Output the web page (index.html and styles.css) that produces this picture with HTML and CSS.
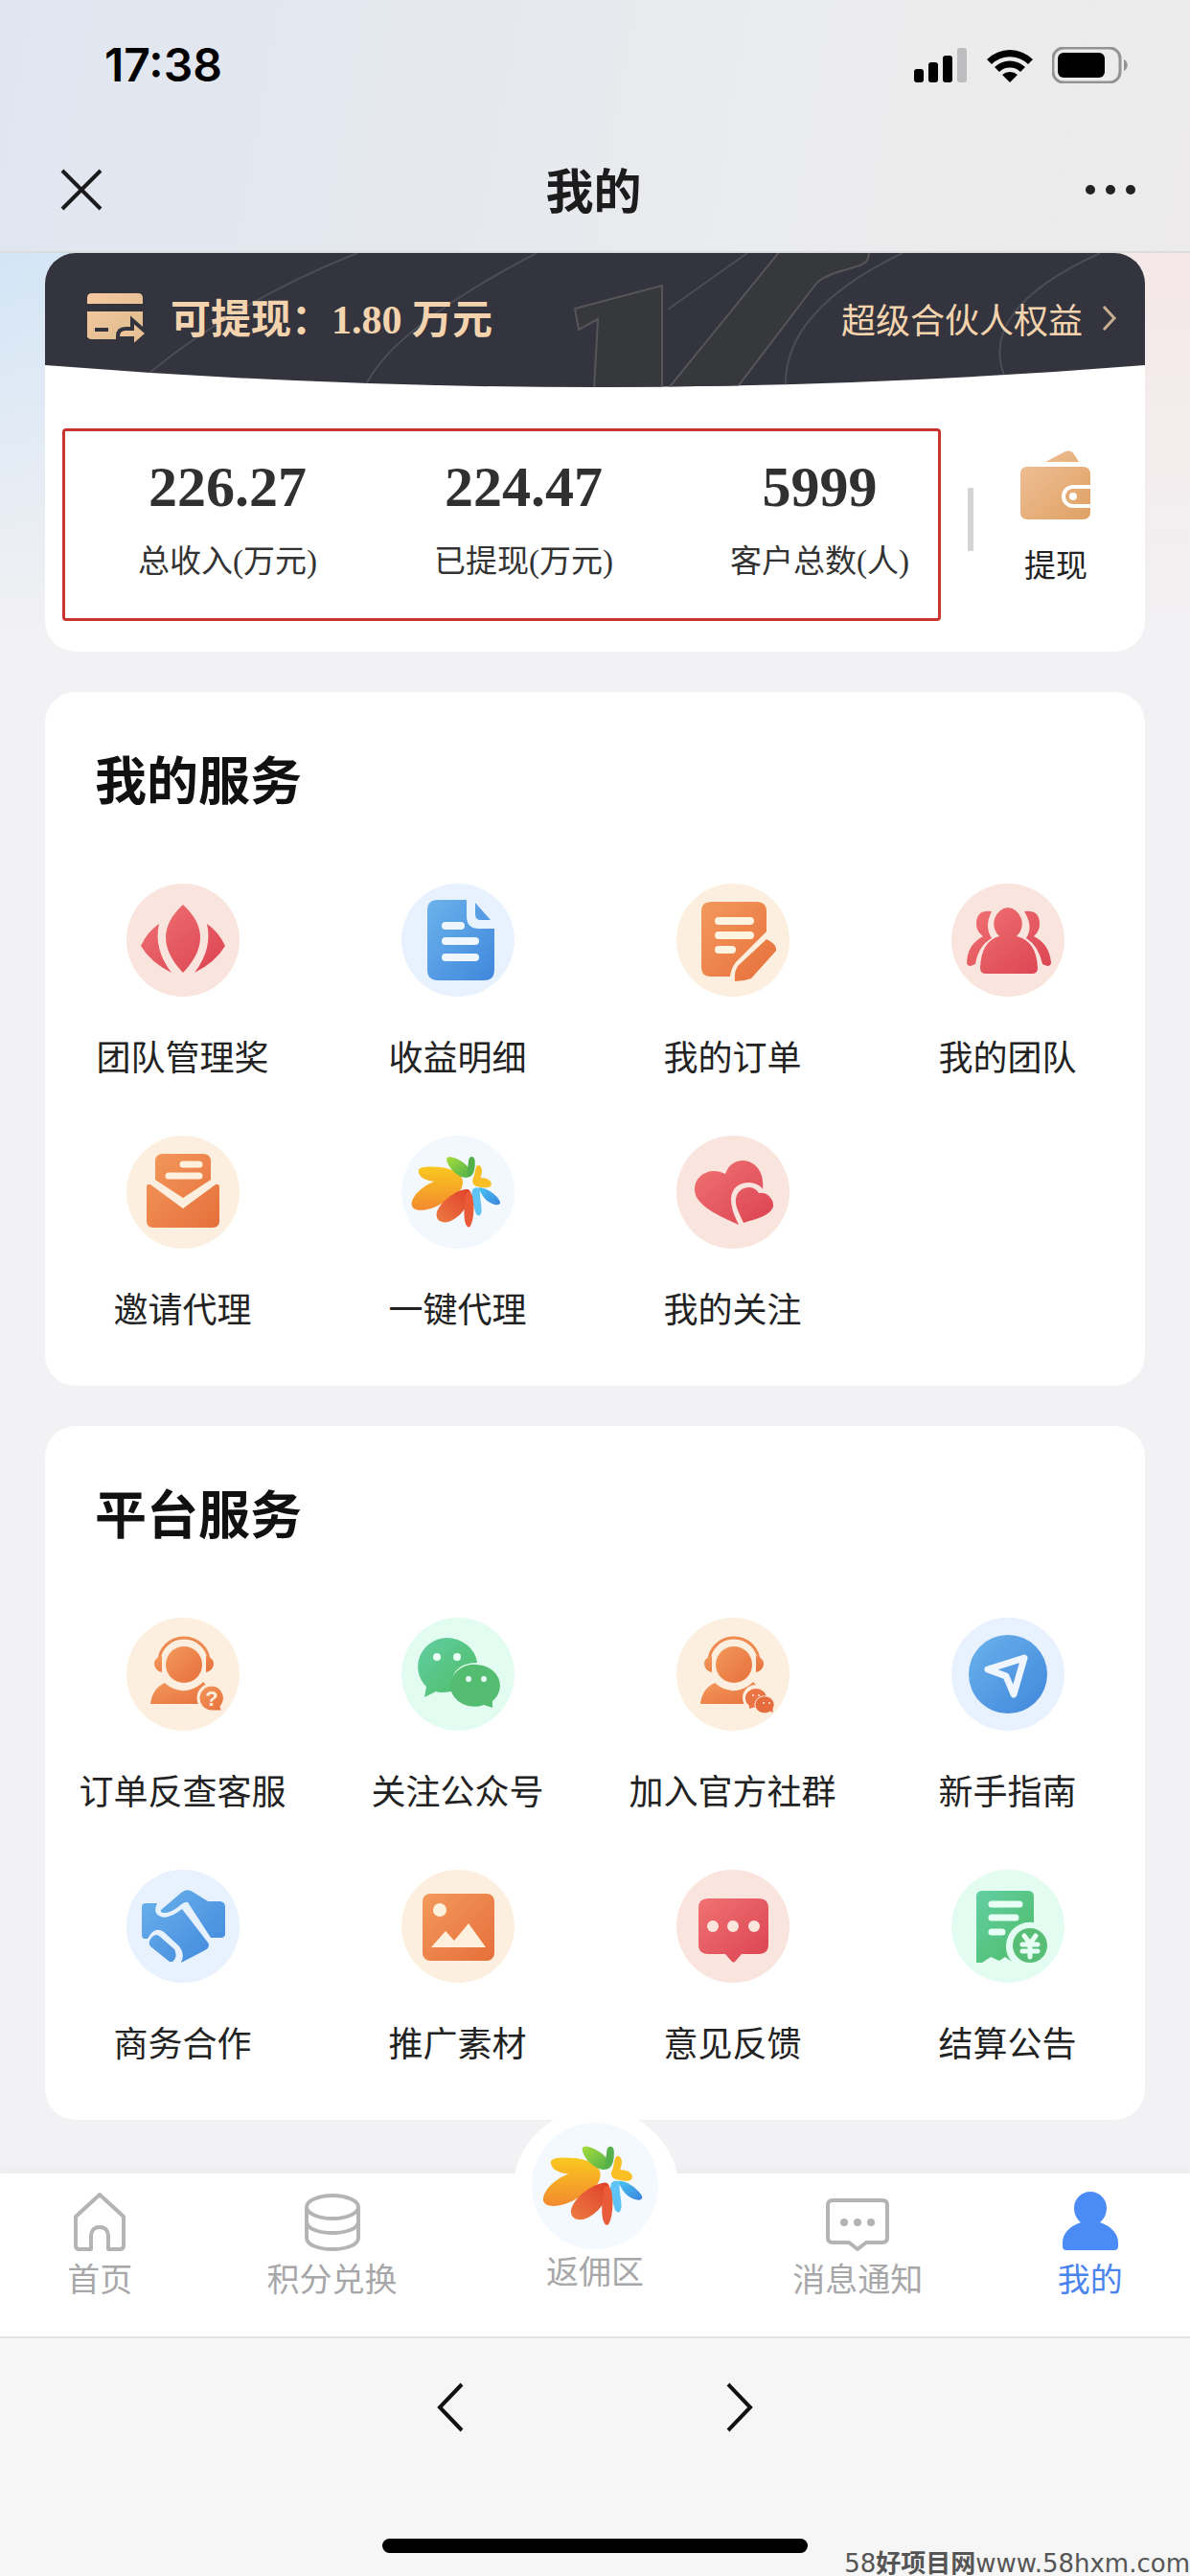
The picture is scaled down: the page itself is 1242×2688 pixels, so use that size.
FILE: index.html
```html
<!DOCTYPE html>
<html lang="zh-CN">
<head>
<meta charset="utf-8">
<meta name="viewport" content="width=device-width, initial-scale=1">
<title>我的</title>
<link rel="stylesheet" href="styles.css">
</head>
<body>
<svg class="defs" aria-hidden="true">
  <defs>
    <linearGradient id="red" x1="0" y1="0" x2="1" y2="1"><stop offset="0" stop-color="#f07272"/><stop offset="1" stop-color="#db4352"/></linearGradient>
    <linearGradient id="blue" x1="0" y1="0" x2="1" y2="1"><stop offset="0" stop-color="#6bb2ec"/><stop offset="1" stop-color="#4087dc"/></linearGradient>
    <linearGradient id="orange" x1="0" y1="0" x2="1" y2="1"><stop offset="0" stop-color="#f3995c"/><stop offset="1" stop-color="#e66f3a"/></linearGradient>
    <linearGradient id="green" x1="0" y1="0" x2="1" y2="1"><stop offset="0" stop-color="#62cfa3"/><stop offset="1" stop-color="#4ebb66"/></linearGradient>
    <linearGradient id="gold" x1="0" y1="0" x2="1" y2="1"><stop offset="0" stop-color="#f0c198"/><stop offset="1" stop-color="#dfa164"/></linearGradient>
    <linearGradient id="sand" x1="0" y1="0" x2="1" y2="1"><stop offset="0" stop-color="#f8c9a2"/><stop offset="1" stop-color="#dcbc8c"/></linearGradient>
    <linearGradient id="sun" x1="0" y1="0" x2="0" y2="1"><stop offset="0" stop-color="#f9c820"/><stop offset="1" stop-color="#f38a2e"/></linearGradient>
    <linearGradient id="ember" x1="1" y1="0" x2="0" y2="1"><stop offset="0" stop-color="#e03f2a"/><stop offset="1" stop-color="#ec7c42"/></linearGradient>
    <linearGradient id="leaf" x1="0" y1="0" x2="1" y2="1"><stop offset="0" stop-color="#a6dc3c"/><stop offset="1" stop-color="#4fb04a"/></linearGradient>
    <linearGradient id="sky" x1="0" y1="0" x2="1" y2="1"><stop offset="0" stop-color="#48c4f4"/><stop offset="1" stop-color="#3c84dc"/></linearGradient>
    <symbol id="flower" viewBox="75 52 396 396">
      <path fill="url(#sun)" d="M135 180C130 160 165 160 195 162C245 162 292 185 290 215C288 250 265 262 225 284C175 318 115 322 111 295C108 270 140 232 190 212C165 210 138 200 135 180Z"/>
      <path fill="url(#leaf)" d="M233 132C238 120 265 128 290 145C310 160 325 178 318 192C305 205 280 198 262 182C245 168 232 145 233 132Z"/>
      <path fill="#55b04c" d="M310 140C312 122 330 122 332 138C334 165 330 190 312 197C302 190 308 160 310 140Z"/>
      <path fill="#f9bf25" d="M338 160C345 150 358 160 357 178C355 190 352 198 352 200C370 198 390 208 390 222C388 238 360 236 340 230C325 226 320 215 327 200C332 190 332 170 338 160Z"/>
      <path fill="#5fc4f5" d="M325 240C335 230 350 232 350 245C348 270 358 300 355 320C352 338 338 335 334 320C328 295 315 260 325 240Z"/>
      <path fill="url(#sky)" d="M345 234C375 232 415 265 421 285C420 300 395 295 375 280C360 268 352 250 345 234Z"/>
      <path fill="url(#ember)" d="M300 240C315 238 320 250 318 265C310 300 275 345 235 355C210 358 195 345 198 325C205 290 260 245 300 240Z"/>
      <path fill="#e85a38" d="M300 258C310 240 325 250 326 280C332 310 325 365 312 373C295 370 294 335 295 310Z"/>
    </symbol>
    <symbol id="agent" viewBox="0 0 118 118">
      <circle cx="60" cy="49" r="19" fill="url(#orange)"/>
      <path fill="none" stroke="#ee8a50" stroke-width="3" d="M34 46A26 25 0 0 1 86 46"/>
      <path fill="url(#orange)" d="M37 40V57C32 56 29 52 29 48S32 41 37 40ZM83 40V57C88 56 91 52 91 48S88 41 83 40Z"/>
      <path fill="url(#orange)" d="M25 90C26 80 31 72 40 68C52 79 68 79 80 67L84 71L92 90Z"/>
    </symbol>
  </defs>
</svg>

<header class="topbar">
  <div class="status">
    <span class="time">17:38</span>
    <span class="signals">
      <svg width="56" height="36" viewBox="0 0 56 36" aria-hidden="true"><rect y="22" width="10" height="14" rx="3"/><rect x="15" y="15" width="10" height="21" rx="3"/><rect x="30" y="8" width="10" height="28" rx="3"/><rect x="45" width="10" height="36" rx="3" fill="#bdbdbf"/></svg>
      <svg width="48" height="36" viewBox="0 0 48 36" aria-hidden="true"><path d="M24 36L16 28A12 12 0 0 1 32 28ZM8 20A23 23 0 0 1 40 20L35 25A16 16 0 0 0 13 25ZM0 12A34 34 0 0 1 48 12L43 17A27 27 0 0 0 5 17Z"/></svg>
      <svg width="80" height="38" viewBox="0 0 80 38" aria-hidden="true"><rect x="1" y="1" width="70" height="36" rx="11" fill="none" stroke="#939395" stroke-width="3"/><rect x="6" y="6" width="49" height="26" rx="6"/><path d="M75 13C80 15 80 23 75 25Z" fill="#939395"/></svg>
    </span>
  </div>
  <div class="nav">
    <button class="plain" aria-label="关闭"><svg width="44" height="44" viewBox="0 0 44 44" aria-hidden="true"><path d="M2 2L42 42M42 2L2 42" stroke="#1b1b1d" stroke-width="4"/></svg></button>
    <h1 class="nav-title">我的</h1>
    <button class="plain" aria-label="更多"><svg width="54" height="44" viewBox="0 0 54 44" aria-hidden="true"><g fill="#222"><circle cx="6" cy="22" r="5"/><circle cx="27" cy="22" r="5"/><circle cx="48" cy="22" r="5"/></g></svg></button>
  </div>
</header>

<main class="content">
  <section class="card wallet">
    <div class="banner">
      <svg class="banner-art" viewBox="0 0 1148 140" preserveAspectRatio="none" aria-hidden="true">
        <defs><clipPath id="arc"><path d="M0 0H1148V117Q574 163 0 117Z"/></clipPath></defs>
        <g clip-path="url(#arc)">
          <path fill="#34343e" d="M0 0H1148V140H0Z"/>
          <g fill="none" stroke="#4c4c54" stroke-width="2">
            <path d="M326 0Q200 50 108 126M513 0Q360 80 334 140M733 0L650 59M895 0Q770 60 773 140M1101 0Q970 60 1003 132"/>
          </g>
          <path fill="#37383c" stroke="#56565a" stroke-width="2" d="M553 58L644 34V142H573L577 69L557 80ZM767 -2H860C860 14 852 12 824 21C812 26 808 28 804 33L721 142H650Z"/>
        </g>
      </svg>
      <svg class="banner-icon" width="64" height="56" viewBox="0 0 64 56" aria-hidden="true">
        <path fill="url(#sand)" d="M5 0H53Q58 0 58 5V11H0V5Q0 0 5 0ZM0 19H58V46H0ZM0 44H58Q58 48 53 48H5Q0 48 0 44Z"/>
        <path d="M8 38H22" stroke="#34343e" stroke-width="4"/>
        <path fill="url(#sand)" stroke="#34343e" stroke-width="4" d="M32 48V45Q32 37 40 37H47V28L63 42L47 56V47H36V50Z"/>
      </svg>
      <p class="balance">可提现：1.80 万元</p>
      <a class="rights" href="#rights">超级合伙人权益<svg width="16" height="28" viewBox="0 0 16 28" aria-hidden="true"><path d="M2 2L13 14L2 26" fill="none" stroke="#c6b08e" stroke-width="3"/></svg></a>
    </div>
    <div class="summary">
      <dl class="stats">
        <div class="stat"><dt>总收入(万元)</dt><dd>226.27</dd></div>
        <div class="stat"><dt>已提现(万元)</dt><dd>224.47</dd></div>
        <div class="stat"><dt>客户总数(人)</dt><dd>5999</dd></div>
      </dl>
      <a class="withdraw" href="#withdraw">
        <svg width="76" height="74" viewBox="0 0 76 74" aria-hidden="true">
          <path fill="url(#gold)" d="M27 12L48 1Q54 -1 57 4L62 12ZM8 17H66Q74 17 74 25V36H56A12 12 0 0 0 56 60H74V64Q74 72 66 72H8Q1 72 1 64V25Q1 17 8 17ZM74 40V56H56A8 8 0 0 1 56 40Z"/>
          <circle cx="56" cy="48" r="4" fill="#fff"/>
        </svg>
        提现
      </a>
    </div>
  </section>

  <section class="card">
    <h2 class="card-title">我的服务</h2>
    <ul class="grid">
      <li><a class="item" href="#award"><svg class="icon rose" viewBox="0 0 118 118" aria-hidden="true"><path fill="url(#red)" d="M59 22Q95 55 59 93Q23 55 59 22ZM34 42Q28 68 47 93Q25 82 15 65Q22 50 34 42ZM84 42Q90 68 71 93Q93 82 103 65Q96 50 84 42Z"/></svg>团队管理奖</a></li>
      <li><a class="item" href="#income"><svg class="icon azure" viewBox="0 0 118 118" aria-hidden="true"><path fill="url(#blue)" d="M38 17H68V34Q68 47 81 47H97V90Q97 101 86 101H38Q27 101 27 90V28Q27 17 38 17ZM77 20L93 38H83Q77 38 77 32Z"/><path stroke="#eef6ff" stroke-width="8" stroke-linecap="round" d="M46 44H62M46 60H77M46 77H77"/></svg>收益明细</a></li>
      <li><a class="item" href="#orders"><svg class="icon cream" viewBox="0 0 118 118" aria-hidden="true"><path fill="url(#orange)" d="M36 19H84Q94 19 94 29V50L62 82Q57 88 56 97H36Q26 97 26 87V29Q26 19 36 19ZM94 58Q105 63 104 70L78 99Q70 102 61 102Q60 92 64 86Z"/><path stroke="#fff3e2" stroke-width="8" stroke-linecap="round" d="M44 39H77M44 54H77M44 69H58"/></svg>我的订单</a></li>
      <li><a class="item" href="#team"><svg class="icon rose" viewBox="0 0 118 118" aria-hidden="true"><path fill="url(#red)" d="M59 25A16 17 0 0 1 68 55Q89 60 90 88Q90 94 84 94H36Q30 94 30 88Q31 60 50 55A16 17 0 0 1 59 25ZM42 29Q26 27 26 42Q26 50 33 55Q17 63 16 82Q16 86 20 86L25 84Q28 65 42 57Q34 45 42 29ZM76 29Q92 27 92 42Q92 50 86 55Q102 63 104 82Q104 86 100 86L95 84Q91 65 78 57Q86 45 76 29Z"/></svg>我的团队</a></li>
      <li><a class="item" href="#invite"><svg class="icon cream" viewBox="0 0 118 118" aria-hidden="true"><path fill="url(#orange)" d="M38 19H80Q88 19 88 27V46L59 65L30 46V27Q30 19 38 19ZM21 54Q21 50 25 51L59 76L93 51Q97 50 97 54V89Q97 96 90 96H28Q21 96 21 89Z"/><path stroke="#fff0dd" stroke-width="7" stroke-linecap="round" d="M59 30H76M44 42H76"/></svg>邀请代理</a></li>
      <li><a class="item" href="#agency"><svg class="icon mist" aria-hidden="true"><use href="#flower"/></svg>一键代理</a></li>
      <li><a class="item" href="#follow"><svg class="icon rose" viewBox="0 0 118 118" aria-hidden="true"><path fill="url(#red)" d="M65 93C45 84 19 73 19 56C19 41 36 32 51 40C55 28 64 26 70 26C84 27 92 40 90 56C84 46 58 45 57 66C57 76 61 85 65 93ZM70 91C65 80 61 73 62 66C64 53 80 50 86 60C94 58 102 66 101 74C98 84 82 87 70 91Z"/></svg>我的关注</a></li>
    </ul>
  </section>

  <section class="card">
    <h2 class="card-title">平台服务</h2>
    <ul class="grid">
      <li><a class="item" href="#support"><svg class="icon cream" viewBox="0 0 118 118" aria-hidden="true"><use href="#agent"/><path fill="url(#orange)" stroke="#fdeedd" stroke-width="3" d="M89 70A14 14 0 1 0 89 98H101L99 93A14 14 0 0 0 89 70Z"/><text class="badge-text" x="89" y="92" text-anchor="middle">?</text></svg>订单反查客服</a></li>
      <li><a class="item" href="#wechat"><svg class="icon mint" viewBox="0 0 118 118" aria-hidden="true"><path fill="url(#green)" d="M47 21A32 29 0 0 1 79 47Q50 47 52 77Q40 79 36 77L24 83L26 72A31 30 0 0 1 47 21Z"/><path fill="#54bd72" d="M79 49A25 22 0 0 1 95 87V94L86 91A25 22 0 1 1 79 49Z"/><g fill="#eafff5"><circle cx="37" cy="41" r="4"/><circle cx="58" cy="41" r="4"/><circle cx="70" cy="64" r="3"/><circle cx="86" cy="64" r="3"/></g></svg>关注公众号</a></li>
      <li><a class="item" href="#group"><svg class="icon cream" viewBox="0 0 118 118" aria-hidden="true"><use href="#agent"/><circle cx="83" cy="84" r="14" fill="#fdeedd"/><path fill="#ea7443" d="M83 74A11 10 0 1 0 83 94A11 10 0 1 0 83 74ZM76 90V95L82 93Z"/><path fill="#e66c3e" stroke="#fdeedd" d="M94 82A10 9 0 1 0 98 98L101 100L101 95A10 9 0 0 0 94 82Z"/><g fill="#fdeedd"><circle cx="80" cy="81" r="1"/><circle cx="86" cy="81" r="1"/><circle cx="91" cy="89" r="1"/><circle cx="97" cy="89" r="1"/></g></svg>加入官方社群</a></li>
      <li><a class="item" href="#guide"><svg class="icon azure" viewBox="0 0 118 118" aria-hidden="true"><circle cx="59" cy="59" r="41" fill="url(#blue)"/><path fill="none" stroke="#eff6ff" stroke-width="7" stroke-linejoin="round" d="M76 42L38 54L57 61L65 80Z"/></svg>新手指南</a></li>
      <li><a class="item" href="#business"><svg class="icon azure" viewBox="0 0 118 118" aria-hidden="true"><path fill="url(#blue)" d="M20 35H32Q27 46 36 49Q44 52 58 41L85 76Q88 81 82 84L57 97Q62 86 53 78L39 65Q32 60 26 66L22 72H19Q16 72 16 68V39Q16 35 20 35ZM36 42L57 24Q63 19 69 23L85 33H98Q103 34 103 39V67Q103 71 98 71H88L64 34Q61 33 55 38Q45 46 38 45Q35 44 36 42ZM34 69L50 83Q54 91 48 96H45L25 80Q22 76 26 71Q30 66 34 69Z"/></svg>商务合作</a></li>
      <li><a class="item" href="#media"><svg class="icon cream" viewBox="0 0 118 118" aria-hidden="true"><rect x="22" y="25" width="75" height="70" rx="8" fill="url(#orange)"/><g fill="#fef0dd"><circle cx="40" cy="42" r="7"/><path d="M31 81L46 64L55 74L70 56L88 81Z"/></g></svg>推广素材</a></li>
      <li><a class="item" href="#feedback"><svg class="icon rose" viewBox="0 0 118 118" aria-hidden="true"><path fill="url(#red)" d="M33 30H86Q96 30 96 40V78Q96 88 86 88H68L61 96Q60 97 58 96L51 88H33Q23 88 23 78V40Q23 30 33 30Z"/><g fill="#fde6dd"><circle cx="38" cy="59" r="6"/><circle cx="59" cy="59" r="6"/><circle cx="81" cy="59" r="6"/></g></svg>意见反馈</a></li>
      <li><a class="item" href="#settlement"><svg class="icon mint" viewBox="0 0 118 118" aria-hidden="true"><path fill="url(#green)" d="M32 22H80Q86 22 86 28V55A25 25 0 0 0 63 96L56 91L50 95L41 91L32 97H26V28Q26 22 32 22Z"/><path stroke="#e8fff5" stroke-width="7" stroke-linecap="round" d="M42 36H71M42 50H67M42 65H53"/><circle cx="82" cy="79" r="18" fill="#58bd75"/><path stroke="#e8fff5" stroke-width="5" stroke-linecap="round" fill="none" d="M76 69L82 77L88 69M82 77V91M74 78H90M74 85H90"/></svg>结算公告</a></li>
    </ul>
  </section>
</main>

<nav class="tabs">
  <a class="tab" href="#home"><svg width="56" height="62" viewBox="0 0 56 62" aria-hidden="true"><path fill="none" stroke="#b4b4b6" stroke-width="4" stroke-linejoin="round" d="M28 3L53 26V56Q53 60 49 60H37V45Q36 37 28 37T19 45V60H7Q3 60 3 56V26Z"/></svg>首页</a>
  <a class="tab" href="#points"><svg width="60" height="62" viewBox="0 0 60 62" aria-hidden="true"><g fill="none" stroke="#b4b4b6" stroke-width="4"><ellipse cx="30" cy="16" rx="27" ry="12"/><path d="M3 16V48C3 64 57 64 57 48V16M3 31C3 47 57 47 57 31"/></g></svg>积分兑换</a>
  <a class="tab tab-main" href="#rebate"><svg class="tab-flower" aria-hidden="true"><use href="#flower"/></svg>返佣区</a>
  <a class="tab" href="#messages"><svg width="66" height="62" viewBox="0 0 66 62" aria-hidden="true"><path fill="none" stroke="#b4b4b6" stroke-width="4" stroke-linejoin="round" d="M7 9H59Q64 9 64 14V48Q64 53 59 53H42L33 60L24 53H7Q2 53 2 48V14Q2 9 7 9Z"/><g fill="#b4b4b6"><circle cx="19" cy="32" r="4"/><circle cx="33" cy="32" r="4"/><circle cx="47" cy="32" r="4"/></g></svg>消息通知</a>
  <a class="tab tab-active" href="#me" aria-current="page"><svg width="58" height="62" viewBox="0 0 58 62" aria-hidden="true"><path fill="#4a8bf5" d="M29 0C39 0 46 8 46 17C46 23 43 29 39 32C51 36 58 44 58 53V57Q58 61 54 61H4Q0 61 0 57V53C0 44 7 36 19 32C15 29 12 23 12 17C12 8 19 0 29 0Z"/></svg>我的</a>
</nav>

<footer class="browser">
  <div class="history">
    <button class="plain" aria-label="后退"><svg width="30" height="52" viewBox="0 0 30 52" aria-hidden="true"><path d="M27 2L4 26L27 50" fill="none" stroke="#111" stroke-width="4"/></svg></button>
    <button class="plain" aria-label="前进"><svg width="30" height="52" viewBox="0 0 30 52" aria-hidden="true"><path d="M3 2L26 26L3 50" fill="none" stroke="#111" stroke-width="4"/></svg></button>
  </div>
  <div class="home-bar"></div>
  <p class="site-mark">58<b>好项目网</b>www.58hxm.com</p>
</footer>
</body>
</html>
```
FILE: styles.css
```css
* { box-sizing: border-box; margin: 0; padding: 0; }

body {
  min-height: 100vh;
  display: flex;
  flex-direction: column;
  background: #f2f1f3;
  color: #222;
  font-family: "Noto Sans CJK SC", sans-serif;
}

a { color: inherit; text-decoration: none; }
ul { list-style: none; }
svg { display: block; flex: none; }
.defs { position: absolute; width: 0; height: 0; }
.plain { display: block; border: 0; background: none; }

/* Status bar and title */
.topbar {
  height: 264px;
  border-bottom: 2px solid #dcdde0;
  background: linear-gradient(100deg, #e0e6f0 0%, #e5e8ee 40%, #ebecee 65%, #edebeb 100%);
}
.status {
  height: 136px;
  padding: 0 64px 0 109px;
  display: flex;
  align-items: center;
  justify-content: space-between;
}
.time { font: 600 48px/56px Inter, sans-serif; color: #000; }
.signals { display: flex; align-items: center; gap: 20px; }
.nav {
  height: 124px;
  padding: 0 56px 0 63px;
  display: grid;
  grid-template-columns: 44px 1fr 54px;
  align-items: center;
}
.nav-title { padding-bottom: 4px; font-size: 50px; line-height: 72px; font-weight: 700; text-align: center; color: #1c1c1c; }

/* Cards */
.content {
  flex: 1;
  padding: 0 47px 56px;
  display: flex;
  flex-direction: column;
  gap: 42px;
  background:
    linear-gradient(180deg, rgba(242, 241, 243, 0) 0, #f2f1f3 400px),
    linear-gradient(90deg, #d3e5f6 0%, #e8ecf4 40%, #f5e8e8 96%);
}
.card { background: #fff; border-radius: 32px; padding-bottom: 57px; }
.card-title { padding: 55px 52px 75px; font-size: 54px; line-height: 70px; font-weight: 700; color: #111; }

.wallet { overflow: hidden; padding-bottom: 68px; }
.banner {
  position: relative;
  height: 140px;
  padding: 0 29px 0 44px;
  display: flex;
  align-items: center;
  color: #f4d4ae;
}
.banner-art { position: absolute; inset: 0; width: 100%; height: 100%; }
.banner-icon, .balance, .rights { position: relative; }
.balance {
  margin-left: 23px;
  font-family: "Liberation Serif", "Noto Sans CJK SC", serif;
  font-size: 42px;
  line-height: 60px;
  font-weight: 600;
}
.rights { margin-left: auto; padding-bottom: 4px; display: flex; align-items: center; gap: 20px; font-size: 36px; line-height: 50px; }

.summary { display: flex; align-items: flex-start; padding: 60px 33px 0 36px; }
.stats {
  position: relative;
  flex: 1;
  display: grid;
  grid-template-columns: repeat(3, 1fr);
  font-family: "Liberation Serif", "Noto Sans CJK SC", serif;
}
.stats::before {
  content: "";
  position: absolute;
  inset: -17px 28px -38px -18px;
  border: 3px solid #c8352d;
  border-radius: 4px;
}
.stat { display: flex; flex-direction: column-reverse; justify-content: flex-end; gap: 10px; text-align: center; }
.stat dt { font-size: 33px; line-height: 48px; color: #333; }
.stat dd { font-size: 60px; line-height: 88px; font-weight: 700; color: #303030; }
.withdraw {
  position: relative;
  width: 152px;
  padding: 6px 0 0 32px;
  display: flex;
  flex-direction: column;
  align-items: center;
  gap: 20px;
  font-size: 33px;
  line-height: 48px;
}
.withdraw::before { content: ""; position: absolute; left: 0; top: 45px; width: 6px; height: 66px; background: #d4d4d6; }

.grid { display: grid; grid-template-columns: repeat(4, 1fr); row-gap: 59px; }
.item { display: flex; flex-direction: column; align-items: center; gap: 36px; font-size: 36px; line-height: 50px; }
.icon { width: 118px; height: 118px; border-radius: 50%; }
.rose { background: #fae4de; }
.azure { background: #e8f1fe; }
.cream { background: #fdefdf; }
.mint { background: #e3fcf2; }
.mist { background: #f3f8ff; }
.badge-text { font: 700 22px "Liberation Sans", sans-serif; fill: #fdeedd; }

/* Tab bar */
.tabs {
  position: relative;
  height: 170px;
  padding-top: 19px;
  display: flex;
  align-items: flex-start;
  justify-content: space-around;
  background: #fff;
  box-shadow: 0 -2px 10px rgba(0, 0, 0, 0.04);
  font-size: 34px;
  line-height: 48px;
  color: #a7a7aa;
}
.tab { position: relative; display: flex; flex-direction: column; align-items: center; gap: 4px; }
.tab-active { color: #4a84ee; }
.tab-main { z-index: 1; width: 132px; margin-top: -72px; gap: 0; line-height: 44px; }
.tab-main::before {
  content: "";
  position: absolute;
  z-index: -1;
  left: -20px;
  top: -15px;
  width: 174px;
  height: 174px;
  border-radius: 50%;
  background: #fff;
}
.tab-flower { width: 132px; height: 132px; border-radius: 50%; background: #f4f9ff; }

/* Browser controls */
.browser {
  position: relative;
  height: 250px;
  padding: 46px 0 24px;
  display: flex;
  flex-direction: column;
  align-items: center;
  justify-content: space-between;
  border-top: 2px solid #e4e4e5;
  background: #f6f6f6;
}
.history { display: flex; gap: 272px; }
.home-bar { width: 444px; height: 15px; border-radius: 8px; background: #000; }
.site-mark {
  position: absolute;
  right: 0;
  bottom: 0;
  font: 26px/26px "DejaVu Sans", "Noto Sans CJK SC", sans-serif;
  color: #555;
}
```
